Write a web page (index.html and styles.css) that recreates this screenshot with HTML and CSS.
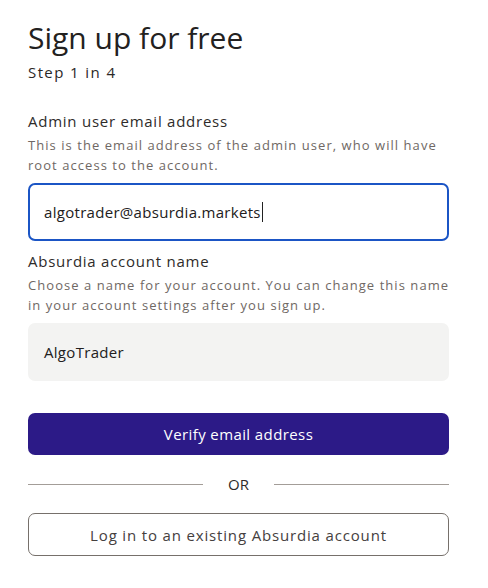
FILE: index.html
```html
<!DOCTYPE html>
<html lang="en">
<head>
<meta charset="utf-8">
<title>Sign up for free</title>
<link rel="stylesheet" href="styles.css">
</head>
<body>
<main class="page">
  <h1 class="title">Sign up for free</h1>
  <p class="step">Step 1 in 4</p>

  <section class="field field-first">
    <label class="label" for="email">Admin user email address</label>
    <p class="help"><span class="hl">This is the email address of the admin user, who will have</span><br><span class="hl">root access to the account.</span></p>
    <div class="input input-focus" id="email"><span>algotrader@absurdia.markets</span><span class="caret"></span></div>
  </section>

  <section class="field">
    <label class="label" for="acct">Absurdia account name</label>
    <p class="help"><span class="hl">Choose a name for your account. You can change this name</span><br><span class="hl">in your account settings after you sign up.</span></p>
    <div class="input input-filled" id="acct"><span>AlgoTrader</span></div>
  </section>

  <button class="btn btn-primary" type="button">Verify email address</button>

  <div class="divider"><span class="line"></span><span class="or">OR</span><span class="line"></span></div>

  <button class="btn btn-outline" type="button">Log in to an existing Absurdia account</button>
</main>
</body>
</html>
```

FILE: styles.css
```css
html, body {
  margin: 0;
  padding: 0;
  background: #ffffff;
}

body {
  font-family: "Open Sans", "Liberation Sans", sans-serif;
  color: #2b2827;
}

.page {
  width: 421px;
  padding: 18px 0 0 28px;
  display: flex;
  flex-direction: column;
}

.title {
  margin: 0;
  font-size: 30px;
  line-height: 40px;
  font-weight: 400;
  color: #232120;
}

.step {
  margin: 3px 0 0;
  font-size: 15px;
  line-height: 22px;
  letter-spacing: 1.4px;
  color: #2b2827;
}

.field {
  display: flex;
  flex-direction: column;
}

.field-first {
  margin-top: 27px;
}

.label {
  font-size: 15px;
  line-height: 22px;
  letter-spacing: 0.75px;
  color: #2e2b2a;
}

.help {
  margin: 3px 0 0;
  font-size: 13px;
  line-height: 20px;
  letter-spacing: 1.05px;
  color: #6f6864;
}

.hl {
  white-space: nowrap;
}

.input {
  margin-top: 8px;
  height: 58px;
  flex: 0 0 58px;
  box-sizing: border-box;
  border-radius: 7px;
  display: flex;
  align-items: center;
  padding: 0 16px;
  font-size: 15px;
  letter-spacing: 0.3px;
  color: #222020;
}

.input-focus {
  border: 2px solid #1b55c5;
  padding-left: 14px;
  margin-bottom: 9px;
}

.input-filled {
  background: #f3f3f2;
}

.caret {
  display: inline-block;
  width: 1px;
  height: 20px;
  background: #222;
  margin-left: 1px;
}

.btn {
  font-family: inherit;
  font-size: 15px;
  width: 421px;
  border-radius: 7px;
  cursor: pointer;
}

.btn-primary {
  margin-top: 32px;
  height: 42px;
  background: #2c1a87;
  color: #ffffff;
  border: none;
  letter-spacing: 0.4px;
}

.divider {
  margin-top: 19px;
  display: flex;
  align-items: center;
  height: 20px;
}

.line {
  flex: 1;
  height: 1px;
  background: #a39d98;
}

.or {
  width: 71px;
  text-align: center;
  font-size: 15px;
  color: #2e2b2a;
}

.btn-outline {
  margin-top: 19px;
  height: 43px;
  background: #ffffff;
  color: #45403e;
  border: 1px solid #76706b;
  letter-spacing: 0.84px;
}
```
